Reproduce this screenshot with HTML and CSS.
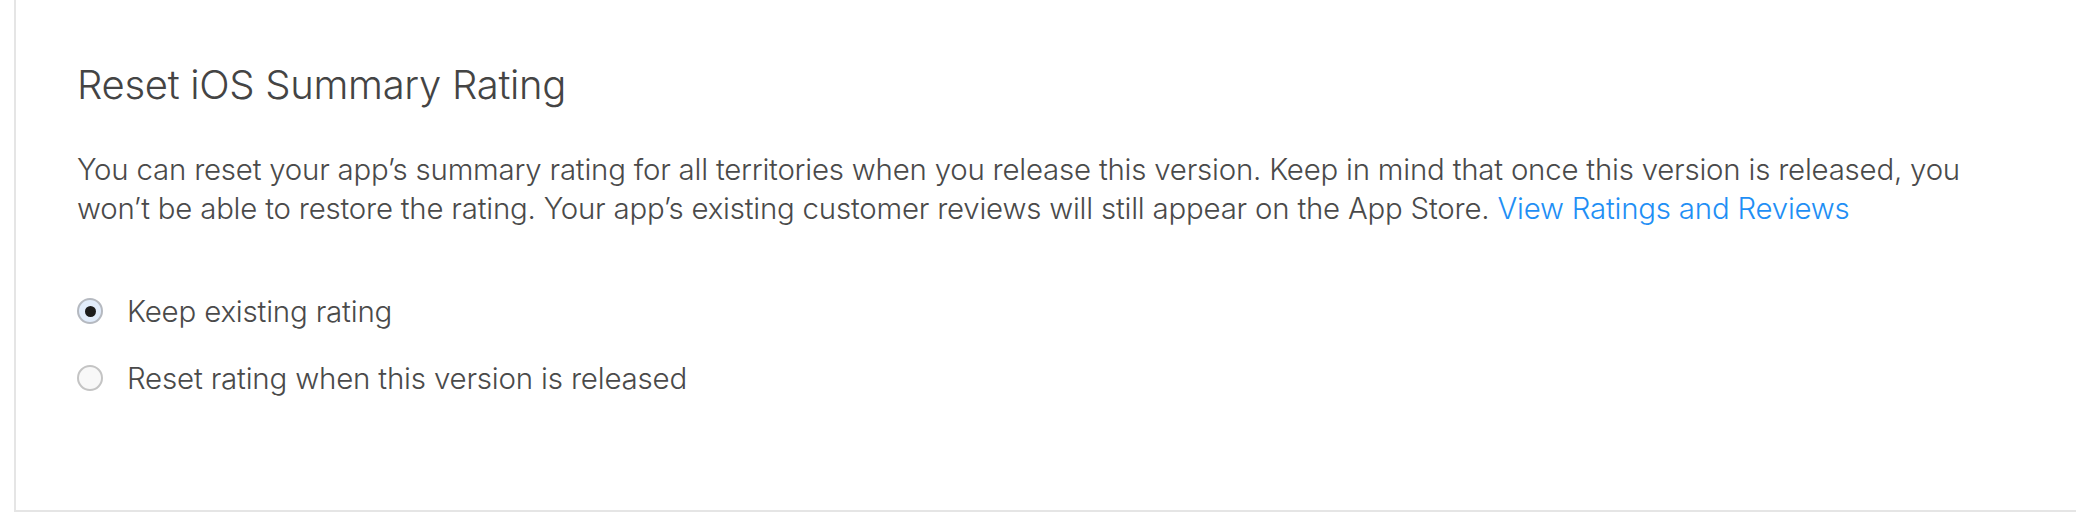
FILE: index.html
```html
<!DOCTYPE html>
<html lang="en">
<head>
<meta charset="utf-8">
<title>Reset iOS Summary Rating</title>
<link rel="stylesheet" href="styles.css">
</head>
<body>
<div class="page">
  <section class="panel">
    <h2 class="panel-title">Reset iOS Summary Rating</h2>
    <p class="panel-text">You can reset your app’s summary rating for all territories when you release this version. Keep in mind that once this version is released, you won’t be able to restore the rating. Your app’s existing customer reviews will still appear on the App Store. <a class="link" href="#">View Ratings and Reviews</a></p>
    <div class="options">
      <label class="option">
        <span class="radio radio-checked"><span class="radio-dot"></span></span>
        <span class="option-label">Keep existing rating</span>
      </label>
      <label class="option">
        <span class="radio"></span>
        <span class="option-label">Reset rating when this version is released</span>
      </label>
    </div>
  </section>
</div>
</body>
</html>
```

FILE: styles.css
```css
html, body {
  margin: 0;
  padding: 0;
  background: #ffffff;
}

body {
  font-family: Inter, "Noto Sans", "Liberation Sans", sans-serif;
  color: #4a4a4a;
  height: 516px;
  overflow: hidden;
}

.page {
  padding-left: 14px;
  height: 516px;
  box-sizing: border-box;
}

.panel {
  border-left: 2px solid #e5e5e5;
  border-bottom: 2px solid #e5e5e5;
  height: 512px;
  box-sizing: border-box;
  padding: 60px 80px 0 61px;
}

.panel-title {
  margin: 0;
  font-size: 40px;
  font-weight: 300;
  line-height: 50px;
  color: #444444;
  letter-spacing: -0.3px;
}

.panel-text {
  margin: 40px 0 0 0;
  font-size: 29.4px;
  font-weight: 300;
  line-height: 39px;
  color: #4a4a4a;
  letter-spacing: -0.2px;
}

.link {
  color: #1f8ff5;
  text-decoration: none;
}

.options {
  margin-top: 63px;
  display: flex;
  flex-direction: column;
  gap: 27px;
}

.option {
  display: flex;
  align-items: center;
  gap: 24px;
  height: 40px;
}

.radio {
  width: 26px;
  height: 26px;
  border-radius: 50%;
  border: 2px solid #c4c4c4;
  background: #f8f8f8;
  box-sizing: border-box;
  display: flex;
  align-items: center;
  justify-content: center;
  flex: none;
}

.radio-checked {
  background: #e1ecfb;
  border-color: #b5b9c0;
}

.radio-dot {
  width: 11px;
  height: 11px;
  border-radius: 50%;
  background: #1c1c1c;
}

.option-label {
  font-size: 29.5px;
  font-weight: 300;
  color: #4a4a4a;
  letter-spacing: -0.2px;
}
```
